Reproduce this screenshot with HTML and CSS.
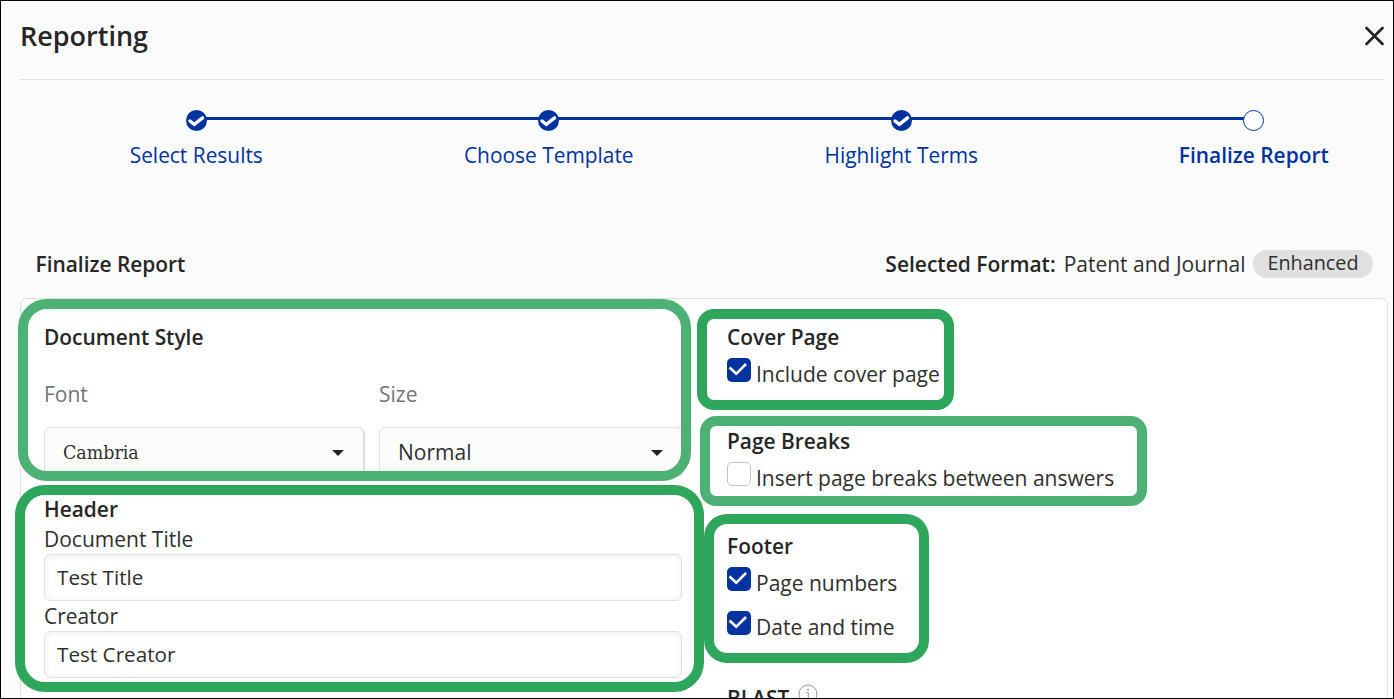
FILE: index.html
```html
<!DOCTYPE html>
<html lang="en">
<head>
    <meta charset="UTF-8">
    <meta name="viewport" content="width=device-width, initial-scale=1.0">
    <title>Reporting</title>
    <link rel="stylesheet" href="styles.css">
</head>
<body>
    <div class="dialog">
        <header class="dialog-header">
            <h1>Reporting</h1>
            <button class="close" aria-label="Close">
                <svg width="20" height="20" viewBox="0 0 20 20"><path d="M1.5 2L17.5 18M17.5 2L1.5 18" fill="none" stroke="#222" stroke-width="2.6" stroke-linecap="round"/></svg>
            </button>
        </header>

        <ol class="steps">
            <li class="step">
                <span class="dot"><svg viewBox="0 0 21 21"><path d="M4 11L8.3 14.4L16.6 7.8" /></svg></span>
                <span class="step-label">Select Results</span>
            </li>
            <li class="step">
                <span class="dot"><svg viewBox="0 0 21 21"><path d="M4 11L8.3 14.4L16.6 7.8" /></svg></span>
                <span class="step-label">Choose Template</span>
            </li>
            <li class="step">
                <span class="dot"><svg viewBox="0 0 21 21"><path d="M4 11L8.3 14.4L16.6 7.8" /></svg></span>
                <span class="step-label">Highlight Terms</span>
            </li>
            <li class="step current">
                <span class="dot"></span>
                <span class="step-label">Finalize Report</span>
            </li>
        </ol>

        <div class="section-bar">
            <h2>Finalize Report</h2>
            <div class="format"><strong>Selected Format:</strong><span class="format-name">Patent and Journal</span><span class="pill">Enhanced</span></div>
        </div>

        <div class="panel">
            <div class="left">
                <section class="doc-style">
                    <h3>Document Style</h3>
                    <div class="selects">
                        <div class="field font-field">
                            <span class="field-label">Font</span>
                            <div class="select cambria"><span>Cambria</span><i class="caret"></i></div>
                        </div>
                        <div class="field size-field">
                            <span class="field-label">Size</span>
                            <div class="select"><span>Normal</span><i class="caret"></i></div>
                        </div>
                    </div>
                </section>
                <section>
                    <h3>Header</h3>
                    <label for="doc-title">Document Title</label>
                    <input type="text" id="doc-title" value="Test Title">
                    <label for="creator">Creator</label>
                    <input type="text" id="creator" value="Test Creator">
                </section>
            </div>

            <div class="right">
                <section class="cover">
                    <h3>Cover Page</h3>
                    <div class="check-row"><span class="box checked"><svg viewBox="0 0 24 24"><path d="M2.5 9.5L9.2 15.8L19 6" /></svg></span><span>Include cover page</span></div>
                </section>
                <section class="breaks">
                    <h3>Page Breaks</h3>
                    <div class="check-row"><span class="box"></span><span>Insert page breaks between answers</span></div>
                </section>
                <section class="footer">
                    <h3>Footer</h3>
                    <div class="check-row"><span class="box checked"><svg viewBox="0 0 24 24"><path d="M2.5 9.5L9.2 15.8L19 6" /></svg></span><span>Page numbers</span></div>
                    <div class="check-row"><span class="box checked"><svg viewBox="0 0 24 24"><path d="M2.5 9.5L9.2 15.8L19 6" /></svg></span><span>Date and time</span></div>
                </section>
                <section class="blast">
                    <h3>BLAST</h3>
                    <svg class="info" width="20" height="20" viewBox="0 0 20 20" fill="none" stroke="#999" stroke-width="1"><circle cx="10" cy="10" r="9"/><path d="M8.3 8.5H10.3V14.5M8 14.5H12.5"/><circle cx="10" cy="5.6" r=".6" fill="#999"/></svg>
                </section>
            </div>
        </div>

        <!-- callout frames over the form groups -->
        <div class="mark mark-style"></div>
        <div class="mark mark-header"></div>
        <div class="mark mark-cover"></div>
        <div class="mark mark-breaks"></div>
        <div class="mark mark-footer"></div>
    </div>
</body>
</html>
```

FILE: styles.css
```css
* {
    box-sizing: border-box;
}
body {
    margin: 0;
    font-family: "Open Sans", sans-serif;
    font-size: 21px;
    line-height: 30px;
    color: #2f2f2f;
}
h1, h2, h3 {
    margin: 0;
    font-weight: 600;
    color: #262626;
}
h2, h3 {
    font-size: 20.9px;
    line-height: 30px;
}
.dialog {
    position: relative;
    width: 1394px;
    height: 699px;
    border: 1px solid #000;
    background: #fbfbfb;
    overflow: hidden;
}
.dialog-header {
    display: flex;
    justify-content: space-between;
    align-items: center;
    height: 79px;
    margin: 0 8px 0 19px;
    padding-bottom: 8px;
    border-bottom: 1px solid #e0e0e0;
}
h1 {
    font-size: 27px;
    line-height: 36px;
}
.close {
    display: flex;
    padding: 0;
    margin-bottom: 1px;
    border: none;
    background: none;
}

/* stepper */
.steps {
    display: grid;
    grid-template-columns: repeat(4, 352.5px);
    width: 1410px;
    margin: 0 0 0 19px;
    padding: 30px 0 0;
    list-style: none;
    color: #0033a0;
}
.step {
    position: relative;
    display: flex;
    flex-direction: column;
    align-items: center;
    gap: 9px;
}
.step:not(.current)::after {
    content: "";
    position: absolute;
    top: 7px;
    left: 50%;
    width: 100%;
    height: 3px;
    background: #0033a0;
}
.step-label {
    font-size: 20.9px;
}
.dot {
    position: relative;
    z-index: 1;
    width: 21px;
    height: 21px;
    border-radius: 50%;
    background: #0033a0;
}
.dot svg {
    display: block;
    fill: none;
    stroke: #fff;
    stroke-width: 3.4;
    stroke-linecap: round;
}
.current .dot {
    border: 1px solid #0033a0;
    background: #fff;
}
.current .step-label {
    font-weight: 600;
}

.section-bar {
    display: flex;
    justify-content: space-between;
    align-items: center;
    height: 30px;
    margin: 79px 20px 0 34.5px;
}
.format {
    display: flex;
    align-items: center;
}
.format strong {
    font-weight: 600;
    color: #262626;
}
.format-name {
    margin: 0 7.5px 0 8px;
}
.pill {
    width: 120px;
    height: 28px;
    border-radius: 14px;
    background: #e0e0e0;
    font-size: 19.8px;
    line-height: 26px;
    text-align: center;
}

.panel {
    display: flex;
    height: 420px;
    margin: 19px 5px 0 19px;
    padding: 23px 23px 0;
    border: 1px solid #e0e0e0;
    border-radius: 7px;
    background: #fff;
}
.left {
    width: 638px;
    margin-right: 45px;
}
.doc-style {
    height: 172px;
}
.selects {
    display: flex;
    gap: 15px;
    padding-top: 27px;
}
.font-field {
    width: 320px;
}
.size-field {
    width: 303px;
}
.field-label {
    display: block;
    margin-bottom: 18px;
    color: #757575;
}
.select {
    display: flex;
    justify-content: space-between;
    align-items: center;
    height: 49px;
    padding: 0 18px;
    border: 1px solid #e0e0e0;
    border-radius: 6px;
    background: #fbfbfb;
    box-shadow: 1px 1px 1px rgba(0, 0, 0, 0.15);
}
.cambria {
    padding-right: 19px;
}
.cambria span {
    padding-top: 3px;
    font-family: "DejaVu Serif Condensed", "DejaVu Serif", serif;
    font-stretch: condensed;
    font-size: 19.4px;
}
.caret {
    margin-top: 2px;
    border: 6px solid transparent;
    border-top-color: #222;
    border-bottom: none;
}
label {
    display: block;
}
input {
    display: block;
    width: 100%;
    height: 47px;
    padding: 0 12px 2px;
    border: 1px solid #e0e0e0;
    border-radius: 6px;
    background: #fff;
    box-shadow: inset 0 1px 7px rgba(0, 0, 0, 0.07);
    font: inherit;
    font-size: 20.7px;
    color: inherit;
}

.cover {
    height: 104px;
}
.breaks {
    height: 105px;
}
.footer {
    height: 152px;
}
.check-row {
    display: flex;
    align-items: flex-start;
    gap: 5px;
    height: 44px;
    line-height: 44px;
}
.box {
    width: 24px;
    height: 24px;
    margin-top: 6px;
    border: 1px solid #c4c4c4;
    border-radius: 5px;
}
.checked {
    border: none;
    background: #0033a0;
}
.box svg {
    display: block;
    fill: none;
    stroke: #fff;
    stroke-width: 2.6;
}
.blast {
    display: flex;
    gap: 9px;
}
.info {
    margin-top: 1px;
}

.mark {
    position: absolute;
    border: 10px solid #2ea65b;
    pointer-events: none;
}
.mark-style {
    left: 17px;
    top: 298px;
    width: 673px;
    height: 182px;
    border-color: #4db175;
    border-radius: 29px;
}
.mark-header {
    left: 14px;
    top: 484px;
    width: 689px;
    height: 207px;
    border-radius: 30px;
}
.mark-cover {
    left: 696px;
    top: 308px;
    width: 257px;
    height: 101px;
    border-radius: 17px;
}
.mark-breaks {
    left: 699px;
    top: 415px;
    width: 447px;
    height: 90px;
    border-color: #4db175;
    border-radius: 16px;
}
.mark-footer {
    left: 703px;
    top: 513px;
    width: 225px;
    height: 149px;
    border-radius: 23px;
}
```
